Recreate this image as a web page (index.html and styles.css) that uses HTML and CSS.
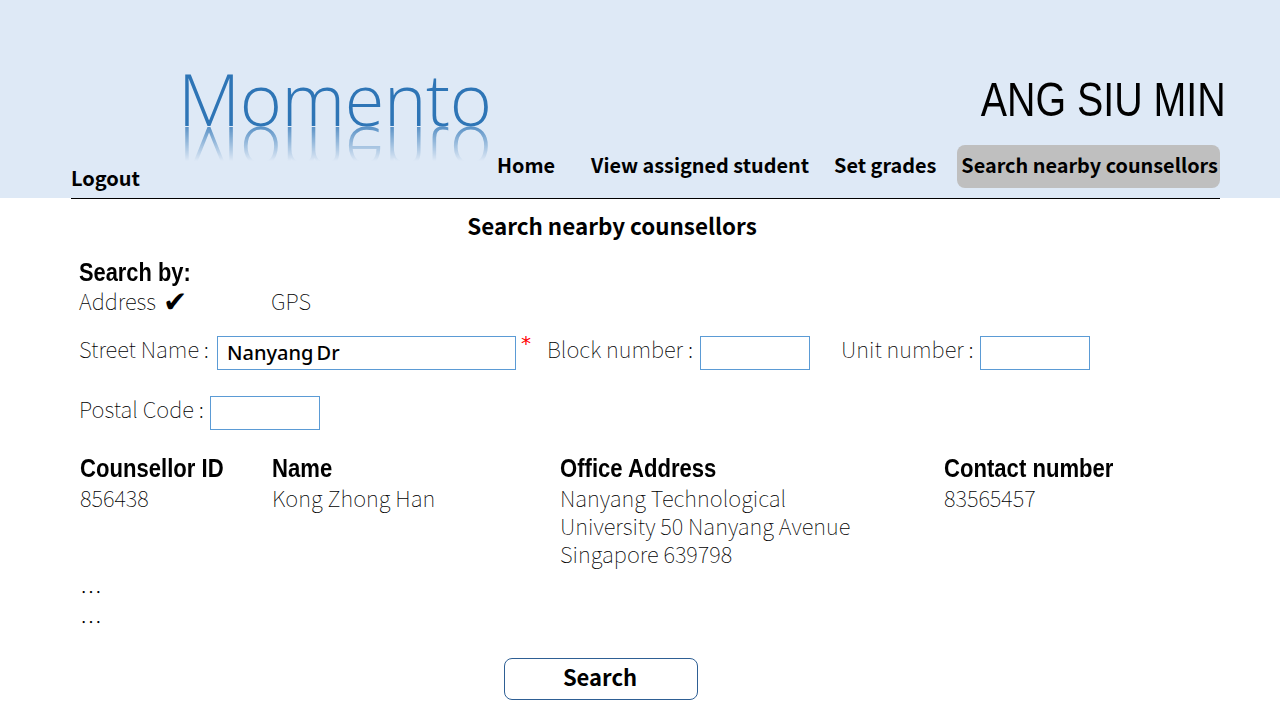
FILE: index.html
```html
<!DOCTYPE html>
<html>
  <head>
    <title>Momento</title>
    <meta name="viewport" content="width=device-width, initial-scale=1" />
    <link rel="stylesheet" href="styles.css">
  </head>
  <body>
    <header class="header">
      <a class="logout" href="#">Logout</a>
      <div class="logo">
        <span class="logo-text">Momento</span>
        <span class="logo-reflect" aria-hidden="true">Momento</span>
      </div>
      <div class="header-right">
        <div class="user-name">ANG SIU MIN</div>
        <nav class="nav">
          <a class="nav-home" href="#">Home</a>
          <a class="nav-view" href="#">View assigned student</a>
          <a class="nav-grades" href="#">Set grades</a>
          <a class="nav-active" href="#">Search nearby counsellors</a>
        </nav>
      </div>
    </header>
    <hr class="header-line" />
    <main class="main">
      <h1 class="title">Search nearby counsellors</h1>
      <h2 class="search-by">Search by:</h2>
      <div class="options">
        <span class="option-address">Address <span class="tick">&#10004;</span></span>
        <span>GPS</span>
      </div>
      <form class="form">
        <div class="form-row">
          <label class="label-street" for="street">Street Name :</label>
          <input id="street" class="input-street" type="text" value="Nanyang Dr" />
          <span class="required">*</span>
          <label class="label-block" for="block">Block number :</label>
          <input id="block" class="input-small" type="text" />
          <label class="label-unit" for="unit">Unit number :</label>
          <input id="unit" class="input-small" type="text" />
        </div>
        <div class="form-row form-row-postal">
          <label for="postal">Postal Code :</label>
          <input id="postal" class="input-small" type="text" />
        </div>
      </form>
      <div class="results">
        <div class="result-head">Counsellor ID</div>
        <div class="result-head">Name</div>
        <div class="result-head">Office Address</div>
        <div class="result-head">Contact number</div>
        <div>856438</div>
        <div>Kong Zhong Han</div>
        <div>Nanyang Technological<br />University 50 Nanyang Avenue<br />Singapore 639798</div>
        <div>83565457</div>
      </div>
      <div class="more more-first">&hellip;</div>
      <div class="more">&hellip;</div>
      <button class="search-btn" type="button">Search</button>
    </main>
  </body>
</html>
```

FILE: styles.css
```css
body {
  margin: 0;
  font-family: "Noto Sans CJK JP", "Noto Sans", sans-serif;
  font-weight: 100;
  font-size: 22px;
  color: #000;
  background-color: #fff;
  height: 720px;
  overflow: hidden;
}

a {
  color: #000;
  text-decoration: none;
}

.header {
  display: flex;
  height: 198px;
  padding-left: 71px;
  box-sizing: border-box;
  background-color: #dee9f6;
}

.logout {
  flex-shrink: 0;
  align-self: flex-end;
  width: 107px;
  padding-bottom: 4px;
  font-size: 20px;
  font-weight: 700;
  line-height: 32px;
}

.logo {
  flex-shrink: 0;
  position: relative;
  width: 319px;
  height: 198px;
}

.logo-text {
  display: block;
  padding-top: 48px;
  font-family: "Open Sans", sans-serif;
  font-size: 72px;
  font-weight: 300;
  letter-spacing: -0.4px;
  line-height: 100px;
  color: #2e75b6;
}

.logo-reflect {
  position: absolute;
  left: 0;
  top: 105px;
  font-family: "Open Sans", sans-serif;
  font-size: 72px;
  font-weight: 300;
  letter-spacing: -0.4px;
  line-height: 100px;
  color: #2e75b6;
  transform: scaleY(-1);
  -webkit-mask-image: linear-gradient(to bottom, transparent 44%, rgba(0, 0, 0, 0.75) 78%);
  mask-image: linear-gradient(to bottom, transparent 44%, rgba(0, 0, 0, 0.75) 78%);
}

.header-right {
  flex: 1;
  display: flex;
  flex-direction: column;
  align-items: flex-end;
  padding-right: 54px;
}

.user-name {
  margin-top: 72px;
  font-family: "Liberation Sans", sans-serif;
  font-size: 48px;
  line-height: 55px;
  white-space: nowrap;
  transform: scaleX(0.82);
  transform-origin: right;
}

.nav {
  display: flex;
  align-items: center;
  align-self: flex-start;
  height: 43px;
  margin-top: 18px;
  font-size: 19.85px;
  font-weight: 700;
  white-space: nowrap;
}

.nav a {
  padding-bottom: 4px;
}

.nav-home {
  margin-right: 36px;
}

.nav-view {
  margin-right: 25px;
}

.nav-grades {
  margin-right: 21px;
}

.nav .nav-active {
  padding: 0 2px 4px 4px;
  line-height: 39px;
  border-radius: 8px;
  background-color: #bfbfbf;
}

.header-line {
  width: 1149px;
  height: 1px;
  margin: 0 0 0 71px;
  border: none;
  background-color: #000;
}

.main {
  padding-left: 79px;
}

.title {
  width: 1066px;
  margin: 8px 0 0;
  font-size: 22.4px;
  font-weight: 700;
  line-height: 36px;
  text-align: center;
}

.search-by {
  margin: 14px 0 0;
  font-family: "Liberation Sans", sans-serif;
  font-size: 26px;
  font-weight: 700;
  line-height: 30px;
  transform: scaleX(0.84);
  transform-origin: left;
}

.options {
  display: flex;
  margin-top: -2px;
  line-height: 30px;
}

.option-address {
  width: 192px;
}

.tick {
  font-family: "DejaVu Sans", sans-serif;
  font-weight: 400;
  font-size: 29px;
  line-height: 20px;
  margin-left: 2px;
  vertical-align: -2px;
}

.form {
  margin-top: 21px;
}

.form-row {
  display: flex;
  align-items: flex-start;
  height: 34px;
}

.form-row label {
  line-height: 24px;
  margin-right: 6px;
}

.form-row .label-street {
  margin-right: 8px;
}

.form-row .label-block {
  margin-right: 7px;
}

.form-row-postal {
  margin-top: 26px;
}

input {
  height: 34px;
  box-sizing: border-box;
  padding: 0 9px 2px;
  border: 1px solid #5b9bd5;
  font-family: "Noto Sans", sans-serif;
  font-size: 20px;
  font-weight: 500;
  word-spacing: -2px;
  color: #000;
  outline: none;
}

.input-street {
  width: 299px;
}

.input-small {
  width: 110px;
}

.required {
  width: 26px;
  margin: -6px 0 0 5px;
  font-family: "DejaVu Sans", sans-serif;
  font-weight: 400;
  font-size: 20px;
  line-height: 26px;
  color: #f00;
}

.label-unit {
  margin-left: 31px;
}

.results {
  display: grid;
  grid-template-columns: 192px 288px 384px auto;
  margin: 24px 0 0 1px;
  line-height: 28px;
}

.result-head {
  font-family: "Liberation Sans", sans-serif;
  font-size: 26px;
  font-weight: 700;
  line-height: 29px;
  transform: scaleX(0.85);
  transform-origin: left;
}

.more {
  margin-left: 1px;
  line-height: 30px;
}

.more-first {
  margin-top: 8px;
}

.search-btn {
  display: block;
  width: 194px;
  height: 42px;
  margin: 23px 0 0 425px;
  border: 1px solid #2e5f94;
  border-radius: 8px;
  background-color: #fff;
  font-family: "Noto Sans CJK JP", sans-serif;
  font-size: 22px;
  font-weight: 700;
  padding: 0 2px 6px 0;
}
```
